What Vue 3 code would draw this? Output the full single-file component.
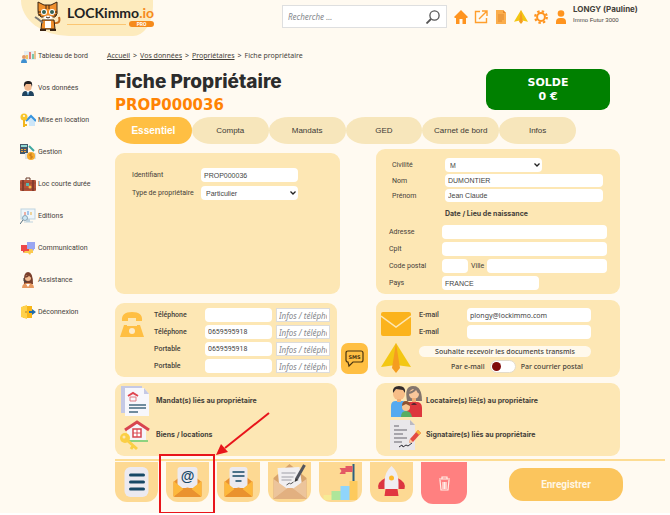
<script setup>
import { reactive, ref } from 'vue';

const search = ref('');
const activeTab = ref('Essentiel');
const tabs = ['Essentiel', 'Compta', 'Mandats', 'GED', 'Carnet de bord', 'Infos'];

const owner = reactive({
  id: 'PROP000036',
  type: 'Particulier',
  civilite: 'M',
  nom: 'DUMONTIER',
  prenom: 'Jean Claude',
  adresse: '',
  cplt: '',
  codePostal: '',
  ville: '',
  pays: 'FRANCE',
  email1: 'plongy@lockimmo.com',
  email2: '',
  parCourrier: false
});

const phones = reactive([
  { label: 'Téléphone', value: '', info: '' },
  { label: 'Téléphone', value: '0659595918', info: '' },
  { label: 'Portable', value: '0659595918', info: '' },
  { label: 'Portable', value: '', info: '' }
]);
</script>

<template>
  <div class="page">
    <header class="top-bar">
      <a class="logo" href="#" aria-label="LOCKimmo.io">
        <svg class="logo-cat" viewBox="0 0 28 30">
          <path d="M20 22q7 1 5-6" fill="none" stroke="#c56a1c" stroke-width="2" />
          <path d="M4 8 4 1l6 3h7l6-3v8q1 4-2 7H7Q3 13 4 8Z" fill="#ef8f2c" stroke="#3a2413" stroke-width="1" />
          <path d="M12 4v4M15 4v4M4 11h3M4 14h3M23 11h-3M23 14h-3" stroke="#3a2413" stroke-width="1" />
          <circle cx="10" cy="11" r="3" fill="#fff" />
          <circle cx="18" cy="11" r="3" fill="#fff" />
          <circle cx="10" cy="11" r="2" fill="#356253" />
          <circle cx="18" cy="11" r="2" fill="#356253" />
          <path d="M9 16q5-3 10 0-2 3-5 3t-5-3Z" fill="#fff" />
          <path d="M12 16q2 2 4 0" stroke="#3a2413" stroke-width="1" fill="none" />
          <path d="M8 19h12l1 9H7Z" fill="#ef8f2c" stroke="#3a2413" stroke-width="1" />
          <path d="M11 20h6v7h-6Z" fill="#fff" />
          <path d="M1 16l3 2 5 4" stroke="#777" stroke-width="2" fill="none" />
          <path d="M6 29h6M16 29h6" stroke="#3a2413" stroke-width="2" />
        </svg>
        <span class="logo-words">
          <span class="logo-name">LOCKimmo<span class="logo-ext">.io</span></span>
          <span class="logo-sub"><span class="logo-line"></span><span class="logo-pro">PRO</span></span>
        </span>
      </a>

      <form class="search" @submit.prevent>
        <input v-model="search" type="search" placeholder="Recherche ..." aria-label="Recherche" />
        <button type="submit" aria-label="Rechercher">
          <svg width="14" height="14" viewBox="0 0 14 14" fill="none" stroke="#555">
            <circle cx="8.500" cy="5.500" r="4.600" stroke-width="1.300" />
            <path d="M5 9 .5 13.500" stroke-width="1.800" />
          </svg>
        </button>
      </form>

      <nav class="shortcuts" aria-label="Raccourcis">
        <a href="#" aria-label="Accueil">
          <svg width="14" height="14" viewBox="0 0 14 14"><path d="M7 0 0 7l1 1h1v6h3.500V9h3v5H12V8h1l1-1Z" fill="#ff941f" /></svg>
        </a>
        <a href="#" aria-label="Ouvrir">
          <svg width="14" height="14" viewBox="0 0 14 14" fill="none" stroke="#ff9e2c" stroke-width="1.4">
            <path d="M6 1.500H1.500v11h11V8M8 1h5v5M13 1 5 9" />
          </svg>
        </a>
        <a href="#" aria-label="Documents">
          <svg width="14" height="14" viewBox="0 0 14 14">
            <path d="M2 0h7l3 3v11H2Z" fill="#fbad4c" />
            <path d="M9 0v3h3Z" fill="#e8892a" />
            <path d="M4 5h6M4 7h6M4 9h6M4 11h4" stroke="#d9822b" stroke-width=".8" />
          </svg>
        </a>
        <a href="#" aria-label="Envois">
          <svg width="14" height="14" viewBox="0 0 30 30">
            <path d="M15 0 30 25 15 22 0 25Z" fill="#f3c713" />
            <path d="M15 0 19 25 15 30 11 25Z" fill="#f59d20" />
          </svg>
        </a>
        <a href="#" aria-label="Réglages">
          <svg width="14" height="14" viewBox="0 0 14 14" fill="none" stroke="#ff941f">
            <circle cx="7" cy="7" r="3.900" stroke-width="2" />
            <circle cx="7" cy="7" r="5.800" stroke-width="2.200" stroke-dasharray="2.400 2.155" />
          </svg>
        </a>
        <a href="#" aria-label="Mon compte">
          <svg width="14" height="14" viewBox="0 0 14 14" fill="#ff941f">
            <circle cx="7" cy="3.500" r="3.300" />
            <path d="M2 14v-2q0-4 4-4h2q4 0 4 4v2Z" />
          </svg>
        </a>
      </nav>

      <div class="user">
        <strong>LONGY (Pauline)</strong>
        <span>Immo Futur 3000</span>
      </div>
    </header>

    <div class="body">
      <nav class="side" aria-label="Menu principal">
        <a href="#">
          <svg viewBox="0 0 16 16">
            <path d="M4 3h12v9H4Z" fill="#e6eef2" />
            <path d="M7 11V7" stroke="#f2b632" stroke-width="1.500" /><path d="M10 11V4" stroke="#e8574e" stroke-width="1.500" />
            <path d="M13 11V6" stroke="#57b894" stroke-width="1.500" /><path d="M15 11V3" stroke="#f09a37" />
            <circle cx="4" cy="9" r="2" fill="#e39b6b" /><path d="M1 15q0-4 3-4t3 4Z" fill="#3f8fd0" />
          </svg>
          Tableau de bord
        </a>
        <a href="#">
          <svg viewBox="0 0 16 16">
            <path d="M2 16q0-5 4-5h4q4 0 4 5Z" fill="#20435f" />
            <path d="M6 10h4l-2 5Z" fill="#fff" /><path d="M8 12v3" stroke="#2b8ccc" />
            <circle cx="8" cy="7" r="3.700" fill="#f3b98e" />
            <path d="M4 7Q3 0 9 1q4 0 3 6l-1-3H6Z" fill="#231f20" />
          </svg>
          Vos données
        </a>
        <a href="#">
          <svg viewBox="0 0 16 16">
            <path d="m7 8 4-4 5 5-1 1v4H9v-4Z" fill="#cde6f8" /><path d="m6 9 5-5 5 5" fill="none" stroke="#3794df" stroke-width="2" />
            <circle cx="4" cy="5" r="3.500" fill="#f8c52b" /><circle cx="4" cy="4" r="1" fill="#fff" />
            <path d="M4 8v7M4 13h3" stroke="#f2b51d" stroke-width="2" />
          </svg>
          Mise en location
        </a>
        <a href="#">
          <svg viewBox="0 0 16 16">
            <path d="M0 0h8v10H0Z" fill="#45586a" /><path d="M1 1h6v2H1Z" fill="#8fd7d2" />
            <path d="M1 5h2v1H1Zm3 0h2v1H4ZM1 7h2v1H1Zm3 0h2v1H4Z" fill="#f2a439" />
            <path d="M5 9h11v6H5Z" fill="#dce3e6" /><path d="m9 2 5 5" stroke="#3fa7a0" stroke-width="2" />
            <circle cx="11" cy="12" r="4" fill="#f6ab2d" /><path d="M12 10h-2v2h2v2h-2" fill="none" stroke="#b96a14" stroke-width=".8" />
          </svg>
          Gestion
        </a>
        <a href="#">
          <svg viewBox="0 0 16 16">
            <path d="M6 4V2h4v2" fill="none" stroke="#6b3a2a" /><rect y="4" width="16" height="11" rx="1" fill="#b65339" />
            <path d="M3 4v11M13 4v11" stroke="#74382b" stroke-width="1.500" /><path d="M0 7h16M0 13h16" stroke="#85402e" stroke-width=".7" />
            <path d="M6 7h3v3H6Z" fill="#54b6ae" /><circle cx="10" cy="11" r="1.500" fill="#f1bc48" />
          </svg>
          Loc courte durée
        </a>
        <a href="#">
          <svg viewBox="0 0 16 16">
            <rect x="1" y="1" width="14" height="10" fill="#eff6fa" stroke="#bfd3df" /><path d="M7 11h3v3H6Z" fill="#bfd3df" /><path d="M4 14h9" stroke="#bfd3df" />
            <path d="M5 7V4" stroke="#ee6a50" /><path d="M8 7V3" stroke="#5d97dd" /><path d="M11 7V4" stroke="#efb13b" />
            <circle cx="5" cy="10" r="2.500" fill="#cce7f5" stroke="#7893a5" stroke-width=".8" /><path d="m3 12-3 4" stroke="#546e80" />
          </svg>
          Editions
        </a>
        <a href="#">
          <svg viewBox="0 0 16 16">
            <path d="M4 8h9v5h-2l-1 2-2-2H4Z" fill="#fbc94e" /><path d="M1 5h8v6H5l-2 2v-2H1Z" fill="#ee4747" />
            <path d="M7 2h8v7h-1v2l-2-2H7Z" fill="#9aa6f2" />
          </svg>
          Communication
        </a>
        <a href="#">
          <svg viewBox="0 0 16 16">
            <path d="M4 12Q3 0 8 0t5 12Z" fill="#7a3f2c" /><path d="M2 16q0-5 6-5t6 5Z" fill="#e79961" />
            <circle cx="8" cy="6" r="3" fill="#f3bd92" /><path d="M5 5q3 0 4-3l2 3" fill="none" stroke="#7a3f2c" stroke-width="1.500" />
            <path d="M4 6v3l3 1" fill="none" stroke="#444" /><path d="m6 12 2 3 2-3Z" fill="#fff" />
          </svg>
          Assistance
        </a>
        <a href="#">
          <svg viewBox="0 0 16 16">
            <path d="M3 2h9v12H3Z" fill="#f8b619" /><path d="m1 3 6-2v14l-6-2Z" fill="#ffd14a" /><circle cx="6" cy="8" r=".7" fill="#9c6810" />
            <path d="M9 7h3V5l4 3-4 3V9H9Z" fill="#216ba8" />
          </svg>
          Déconnexion
        </a>
      </nav>

      <main class="main">
        <nav class="crumbs" aria-label="Fil d'ariane">
          <a href="#">Accueil</a><span>&gt;</span>
          <a href="#">Vos données</a><span>&gt;</span>
          <a href="#">Propriétaires</a><span>&gt;</span>
          <span>Fiche propriétaire</span>
        </nav>

        <div class="heading">
          <div class="heading-text">
            <h1>Fiche Propriétaire</h1>
            <p class="ref">PROP000036</p>
          </div>
          <div class="balance">
            <span>SOLDE</span>
            <span>0 €</span>
          </div>
        </div>

        <div class="tabs">
          <button
            v-for="tab in tabs"
            :key="tab"
            type="button"
            class="tab"
            :class="{ active: tab === activeTab }"
            @click="activeTab = tab"
          >{{ tab }}</button>
        </div>

        <div class="row row-identity">
          <section class="panel panel-id">
            <div class="field">
              <label for="identifiant">Identifiant</label>
              <input id="identifiant" v-model="owner.id" class="short" type="text" />
            </div>
            <div class="field">
              <label for="type">Type de propriétaire</label>
              <select id="type" v-model="owner.type" class="short">
                <option>Particulier</option>
                <option>Société</option>
              </select>
            </div>
          </section>

          <section class="panel panel-person">
            <div class="names">
              <div class="field">
                <label for="civilite">Civilité</label>
                <select id="civilite" v-model="owner.civilite" class="short">
                  <option>M</option>
                  <option>Mme</option>
                </select>
              </div>
              <div class="field">
                <label for="nom">Nom</label>
                <input id="nom" v-model="owner.nom" type="text" />
              </div>
              <div class="field">
                <label for="prenom">Prénom</label>
                <input id="prenom" v-model="owner.prenom" type="text" />
              </div>
            </div>
            <p class="birth">Date / Lieu de naissance</p>
            <div class="address">
              <div class="field">
                <label for="adresse">Adresse</label>
                <input id="adresse" v-model="owner.adresse" type="text" />
              </div>
              <div class="field">
                <label for="cplt">Cplt</label>
                <input id="cplt" v-model="owner.cplt" type="text" />
              </div>
              <div class="field">
                <label for="cp">Code postal</label>
                <div class="city">
                  <input id="cp" v-model="owner.codePostal" type="text" class="zip" />
                  <label for="ville">Ville</label>
                  <input id="ville" v-model="owner.ville" type="text" />
                </div>
              </div>
              <div class="field">
                <label for="pays">Pays</label>
                <input id="pays" v-model="owner.pays" class="short" type="text" />
              </div>
            </div>
          </section>
        </div>

        <div class="row row-contact">
          <section class="panel panel-phone">
            <svg class="phone-icon" viewBox="0 0 24 28">
              <path d="M2 10Q1 1 12 1t10 9h-6V7H8v3Z" fill="#ffbf43" />
              <path d="M4 14h3v1h10v-1h3l4 12H0Z" fill="#ffbf43" />
              <circle cx="12" cy="20" r="3" fill="#fdeccb" />
            </svg>
            <div class="phones">
              <div v-for="(phone, i) in phones" :key="i" class="phone">
                <label :for="'tel' + i">{{ phone.label }}</label>
                <input :id="'tel' + i" v-model="phone.value" type="tel" />
                <input v-model="phone.info" class="info" type="text" placeholder="Infos / téléphone" :aria-label="'Infos ' + phone.label" />
              </div>
            </div>
          </section>

          <button type="button" class="sms" aria-label="Envoyer un SMS">
            <svg width="19" height="18" viewBox="0 0 19 18">
              <path d="M3 1h13q2 0 2 2v7q0 2-2 2H8l-4 4-1-4q-2 0-2-2V3q0-2 2-2Z" fill="none" stroke="#4b3510" stroke-width="1.200" />
              <text x="9.500" y="9" text-anchor="middle">SMS</text>
            </svg>
          </button>

          <section class="panel panel-mail">
            <div class="mail-icons">
              <svg width="30" height="24" viewBox="0 0 30 24">
                <rect width="30" height="24" rx="2" fill="#fbb31c" />
                <path d="m0 4 15 11L30 4" fill="none" stroke="#fde7b4" stroke-width="1.500" />
              </svg>
              <svg width="30" height="30" viewBox="0 0 30 30">
                <path d="M15 0 30 24 15 22 0 24Z" fill="#f3c713" />
                <path d="M15 0 19 25 15 30 11 25Z" fill="#f59d20" />
              </svg>
            </div>
            <div class="mail-fields">
              <div class="mail">
                <label for="email1">E-mail</label>
                <input id="email1" v-model="owner.email1" type="email" />
              </div>
              <div class="mail">
                <label for="email2">E-mail</label>
                <input id="email2" v-model="owner.email2" type="email" />
              </div>
              <p class="pill">Souhaite recevoir les documents transmis</p>
              <div class="choice">
                <span>Par e-mail</span>
                <input id="courrier" v-model="owner.parCourrier" type="checkbox" />
                <label for="courrier">Par courrier postal</label>
              </div>
            </div>
          </section>
        </div>

        <div class="row row-links">
          <section class="panel panel-links">
            <a href="#">
              <svg viewBox="0 0 32 32">
                <path d="M1 1h21v27H1Z" fill="#c5c9e5" />
                <path d="M5 3h19l5 6v22H5Z" fill="#f7f7fc" /><path d="M24 3v6h5Z" fill="#c5c9e5" />
                <path d="m8 11 5-3 5 3" fill="none" stroke="#df4550" stroke-width="2" /><path d="M10 12h6v4h-6Z" fill="none" stroke="#df7a82" />
                <path d="M9 20h17M9 23h17M9 27h9" stroke="#44697f" stroke-width="1.300" />
              </svg>
              Mandat(s) liés au propriétaire
            </a>
            <a href="#">
              <svg viewBox="0 0 32 32">
                <path d="M7 10 17 3l9 7v12H7Z" fill="#f5f5fa" /><path d="m5 11 12-8 12 8" fill="none" stroke="#d84550" stroke-width="3" />
                <rect x="13" y="10" width="8" height="8" fill="#fff" stroke="#d84550" stroke-width="1.500" /><path d="M17 10v8M13 14h8" stroke="#d84550" />
                <path d="M7 22h21" stroke="#8ed37f" stroke-width="2" />
                <circle cx="5" cy="19" r="5" fill="#fbcf45" /><circle cx="4" cy="18" r="1.500" fill="#fde7b4" />
                <path d="m8 22 9 8M13 27l-2 3" stroke="#fbcf45" stroke-width="3" />
              </svg>
              Biens / locations
            </a>
          </section>

          <section class="panel panel-links">
            <a href="#">
              <svg viewBox="0 0 32 32">
                <path d="M17 16Q14 1 23 1t9 15Z" fill="#84766d" />
                <path d="M1 32V21q0-5 5-5h6q5 0 5 5v11Z" fill="#55aaf0" /><path d="M17 32V17h11q4 1 4 6v9Z" fill="#dd373d" />
                <circle cx="9" cy="9" r="6" fill="#f7bd87" /><path d="M3 8Q2 1 9 1t6 7l-2-3-7-1Z" fill="#332b2a" />
                <circle cx="24" cy="9" r="5" fill="#f9c79b" /><path d="M19 8q5-1 7-5l3 5" fill="none" stroke="#84766d" stroke-width="2" />
                <path d="M7 14h4v3H7ZM22 13h4v4h-4Z" fill="#efad76" /><path d="m23 18-2 2h6l-2-2Z" fill="#5d2630" />
                <path d="M11 32q0-6 5-6t6 6Z" fill="#58ad62" /><circle cx="16" cy="22" r="4" fill="#f8c693" /><path d="M12 21q0-5 4-5t4 5l-4-2Z" fill="#8e5130" />
              </svg>
              Locataire(s) lié(s) au propriétaire
            </a>
            <a href="#">
              <svg viewBox="0 0 32 32">
                <path d="M0 1h20l5 5v25H0Z" fill="#e9e7ea" /><path d="M20 1v5h5Z" fill="#bbb9c1" />
                <path d="M4 7h5M4 11h13M4 15h9M4 19h13M4 23h8" stroke="#66646c" stroke-width="1.200" />
                <path d="m9 28 3-2 1 2 3-2 2 1 4-3" fill="none" stroke="#33313a" />
                <path d="m20 20 8-9 3 3-8 9-4 1Z" fill="#e34b42" /><path d="m26 13 2-2 3 3-2 2Z" fill="#f8b739" /><path d="m20 20-1 4 4-1Z" fill="#f7cda1" />
              </svg>
              Signataire(s) liés au propriétaire
            </a>
          </section>
        </div>

        <footer class="actions">
          <button type="button" class="action" aria-label="Menu">
            <svg viewBox="0 0 42 40">
              <rect x="9" y="5" width="24" height="30" rx="6" fill="#eceaf0" />
              <path d="M15 13h13M15 20h13M15 27h13" stroke="#164866" stroke-width="3" stroke-linecap="round" />
            </svg>
          </button>
          <div class="marked">
            <button type="button" class="action" aria-label="Envoyer un e-mail">
              <svg viewBox="0 0 42 40">
                <path d="m7 20 6-5h16l6 5v14H7Z" fill="#e9902f" /><path d="M11 8q0-3 3-3h14q3 0 3 3v18H11Z" fill="#eceaf0" />
                <path d="m7 19 10 8-10 8ZM35 19l-10 8 10 8Z" fill="#fdb83c" /><path d="m7 35 12-9q2-1 4 0l12 9Z" fill="#ea922f" />
                <text class="at" x="21" y="19" text-anchor="middle">@</text>
              </svg>
            </button>
            <svg class="marker" width="112" height="104" viewBox="0 0 112 104">
              <rect x="1" y="44" width="54" height="58" fill="none" stroke="#e8151b" stroke-width="2" />
              <path d="M110 2 66 37" stroke="#e8151b" stroke-width="2" /><path d="m57 44 5-11 7 8Z" fill="#e8151b" />
            </svg>
          </div>
          <button type="button" class="action" aria-label="Courrier">
            <svg viewBox="0 0 42 40">
              <path d="m7 20 6-5h16l6 5v14H7Z" fill="#e9902f" /><path d="M12 8q0-3 3-3h12q3 0 3 3v18H12Z" fill="#eceaf0" />
              <path d="m7 19 10 8-10 8ZM35 19l-10 8 10 8Z" fill="#fdb83c" /><path d="m7 35 12-9q2-1 4 0l12 9Z" fill="#ea922f" />
              <path d="M15 10h12M15 14h12M18 19h6" stroke="#164866" stroke-width="1.600" />
            </svg>
          </button>
          <button type="button" class="action" aria-label="Lettre">
            <svg viewBox="0 0 42 40">
              <path d="M5 16 21 2l17 14v21H5Z" fill="#d7a36b" /><path d="m9 6 22-1 3 22H11Z" fill="#f1eff1" />
              <path d="M13 11h14M13 15h12M13 18h10" stroke="#a0a0a8" stroke-width="1.200" /><path d="m18 23 3-2 1 1 3-2" fill="none" stroke="#555" />
              <path d="m5 17 14 10L5 37ZM38 17 24 27l14 10Z" fill="#ecc49b" /><path d="m5 37 14-11h5l14 11Z" fill="#e2b080" />
              <path d="m28 17 8-14" stroke="#52555e" stroke-width="3" /><path d="m26 20 1-4 3 2Z" fill="#333" />
            </svg>
          </button>
          <button type="button" class="action" aria-label="Objectifs">
            <svg viewBox="0 0 42 40">
              <path d="M4 33h9v5H4Z" fill="#f7ea94" /><path d="M12 29h10v9H12Z" fill="#aee69a" /><path d="M21 24h10v14H21Z" fill="#90d5fb" /><path d="M30 19h8v19h-8Z" fill="#fdca5c" />
              <path d="M34 2v17" stroke="#2d6180" stroke-width="2" /><path d="M26 4h7v6h-7v2h-6l2-3-2-3h6Z" fill="#e35864" />
            </svg>
          </button>
          <button type="button" class="action" aria-label="Lancer">
            <svg viewBox="0 0 42 40">
              <path d="M15 16q-9 4-7 11h8ZM27 16q9 4 7 11h-8Z" fill="#dc3540" />
              <path d="M15 27h12l1 7H14Z" fill="#e13540" /><path d="M21 4q-7 6-7 16v7h14v-7q0-10-7-16Z" fill="#f0edf1" />
              <circle cx="21" cy="16" r="2.500" fill="#fdb82c" />
            </svg>
          </button>
          <button type="button" class="action delete" aria-label="Supprimer">
            <svg viewBox="0 0 46 42">
              <path d="M18 17h11M21 17v-2h5v2M19 18l1 10h7l1-10M22 20v7M23.500 20v7M25 20v7" fill="none" stroke="#fff0e8" stroke-width="1.200" />
            </svg>
          </button>
          <button type="button" class="save">Enregistrer</button>
        </footer>
      </main>
    </div>
  </div>
</template>

<style>
body {
  background: #fff;
}
</style>

<style scoped>
.page {
  background: #fffaf1;
  font-family: Roboto, "Liberation Sans", sans-serif;
  font-size: 7px;
  line-height: 10px;
  color: #45413a;
}

.page *, .page *::before {
  box-sizing: border-box;
}

p, h1 {
  margin: 0;
}

a {
  color: inherit;
}

button {
  border: none;
  padding: 0;
  cursor: pointer;
  font-family: inherit;
}

svg {
  display: block;
  flex-shrink: 0;
}

input, select {
  width: 100%;
  min-width: 0;
  height: 14px;
  padding: 0 3px;
  border: none;
  border-radius: 4px;
  background: #fff;
  font-family: "Liberation Sans", Arial, sans-serif;
  font-size: 7px;
  color: #444;
}

select {
  appearance: none;
  padding: 0 5px;
  background: #fff url("data:image/svg+xml,%3Csvg xmlns='http://www.w3.org/2000/svg' width='6' height='4' viewBox='0 0 6 4'%3E%3Cpath d='M.5.5 3 3 5.500.5' fill='none' stroke='%23222' stroke-width='1.300'/%3E%3C/svg%3E") no-repeat right 2px center;
}

/* header */
.top-bar {
  display: flex;
  align-items: flex-start;
  height: 40px;
}

.logo {
  display: flex;
  width: 132px;
  height: 36px;
  margin-left: 21px;
  padding: 1px 0 0 13px;
  gap: 5px;
  background: #fdebbe;
  border-radius: 0 0 20px 48px / 0 0 30px 36px;
  text-decoration: none;
}

.logo-cat {
  width: 28px;
  height: 30px;
}

.logo-words {
  display: flex;
  flex-direction: column;
  padding-top: 3px;
}

.logo-name {
  font-family: Lato, sans-serif;
  font-size: 14px;
  line-height: 17px;
  font-weight: 700;
  color: #222;
}

.logo-ext {
  color: #f58a1c;
}

.logo-sub {
  display: flex;
  align-items: center;
  gap: 3px;
}

.logo-line {
  flex: 1;
  height: 1px;
  background: #fbc672;
}

.logo-pro {
  width: 25px;
  border-radius: 3px;
  background: #f58a1c;
  color: #fff;
  font-size: 5px;
  line-height: 6px;
  font-weight: 700;
  text-align: center;
}

.search {
  display: flex;
  flex: 1;
  align-items: center;
  height: 23px;
  margin: 5px 7px 0 129px;
  border: 1px solid #dedfe0;
  background: #fff;
}

.search input {
  flex: 1;
  height: 20px;
  padding: 0 5px;
  font-family: "Noto Sans", sans-serif;
}

.search input::placeholder, .info::placeholder {
  font-style: italic;
  color: #85888c;
}

.search input, .info {
  font-size: 8px;
}

.search button {
  width: 20px;
  background: none;
}

.shortcuts {
  display: flex;
  gap: 6px;
  padding-top: 10px;
}

.user {
  display: flex;
  flex-direction: column;
  width: 97px;
  margin: 3px 0 0 5px;
  white-space: nowrap;
}

.user strong {
  font-family: Inter, sans-serif;
  font-size: 8px;
  line-height: 12px;
}

.user span {
  font-family: "Liberation Sans", Arial, sans-serif;
  font-size: 6px;
}

/* layout */
.body {
  display: grid;
  grid-template-columns: 115px 1fr;
}

.side {
  display: flex;
  flex-direction: column;
}

.side a {
  display: flex;
  align-items: center;
  gap: 2px;
  height: 32px;
  padding-left: 20px;
  text-decoration: none;
  white-space: nowrap;
}

.side svg {
  width: 16px;
  height: 16px;
}

.main {
  min-width: 0;
  padding: 11px 5px 8px 0;
}

.crumbs {
  display: flex;
  gap: 3px;
  margin-left: -8px;
  font-family: "Noto Sans", sans-serif;
}

.heading {
  display: flex;
  justify-content: space-between;
  margin: 8px 55px 0 0;
}

h1 {
  font-family: Inter, sans-serif;
  font-size: 19px;
  line-height: 25px;
  font-weight: 800;
  color: #2c2c2c;
}

.ref {
  font-family: "DejaVu Sans", sans-serif;
  font-size: 15px;
  line-height: 22px;
  font-weight: 700;
  color: #ff8303;
}

.balance {
  display: flex;
  flex-direction: column;
  justify-content: center;
  align-items: center;
  width: 124px;
  height: 41px;
  border-radius: 9px;
  background: #008000;
  color: #fff;
  font-family: "DejaVu Sans", sans-serif;
  font-size: 11px;
  line-height: 14px;
  font-weight: 700;
}

.tabs {
  display: grid;
  grid-template-columns: repeat(6, 1fr);
  margin: 1px 89px 0 0;
}

.tab {
  height: 27px;
  border-radius: 20px 14px 14px 20px / 14px;
  background: #f7e6bb;
  color: #3c3a36;
  font-family: "Liberation Sans", Arial, sans-serif;
  font-size: 8px;
  white-space: nowrap;
}

.tab.active {
  background: #ffbf43;
  color: #fff;
  font-size: 10px;
  font-weight: 700;
}

/* panels */
.row {
  display: grid;
  margin-right: 45px;
}

.row-identity {
  grid-template-columns: 225fr 244fr;
  column-gap: 36px;
  align-items: end;
  margin-top: 5px;
}

.row-contact {
  grid-template-columns: 222fr auto 244fr;
  align-items: end;
  margin-top: 6px;
}

.row-links {
  grid-template-columns: 222fr 244fr;
  column-gap: 39px;
  margin-top: 6px;
}

.panel {
  border-radius: 9px;
  background: #fde7b4;
}

.field {
  display: grid;
  grid-template-columns: 53px 1fr;
  align-items: center;
  white-space: nowrap;
}

.short {
  max-width: 97px;
}

.panel-id {
  display: flex;
  flex-direction: column;
  gap: 4px;
  min-height: 141px;
  padding: 15px 17px;
}

.panel-id .field {
  grid-template-columns: 69px 1fr;
}

.panel-person {
  padding: 9px 13px 4px;
}

.names {
  display: grid;
  gap: 2px;
  padding: 0 4px 0 3px;
}

.names input {
  height: 13px;
}

.birth {
  padding-left: 56px;
  font-family: Inter, sans-serif;
  font-weight: 700;
  line-height: 23px;
}

.address {
  display: grid;
  gap: 3px;
}

.city {
  display: flex;
  align-items: center;
  gap: 3px;
}

.city .zip {
  width: 26px;
  flex-shrink: 0;
}

.panel-phone {
  display: flex;
  gap: 10px;
  padding: 5px 7px 4px 5px;
}

.phone-icon {
  width: 24px;
  height: 28px;
  margin-top: 3px;
}

.phones {
  display: grid;
  flex: 1;
  gap: 3px;
}

.phone {
  display: grid;
  grid-template-columns: 47px 67fr 54fr;
  column-gap: 4px;
  align-items: center;
  font-weight: 500;
}

.phone input {
  font-family: Roboto, sans-serif;
}

.phone .info {
  border: 1px solid #dcdcdc;
  border-radius: 0;
  padding: 0 2px;
  font-family: "Noto Sans", sans-serif;
}

.sms {
  display: flex;
  align-items: center;
  justify-content: center;
  width: 27px;
  height: 31px;
  margin: 0 8px 3px 4px;
  border-radius: 7px;
  background: #ffbf43;
}

.sms text {
  font-family: "DejaVu Sans", sans-serif;
  font-size: 5px;
  font-weight: 700;
  fill: #4b3510;
}

.panel-mail {
  display: flex;
  gap: 8px;
  padding: 8px 29px 4px 5px;
}

.mail-icons {
  display: flex;
  flex-direction: column;
  gap: 7px;
  padding-top: 4px;
}

.mail-fields {
  display: flex;
  flex: 1;
  flex-direction: column;
  gap: 3px;
  font-weight: 500;
}

.mail {
  display: grid;
  grid-template-columns: 48px 1fr;
  align-items: center;
}

.mail input {
  font-family: "Noto Sans", sans-serif;
}

.pill {
  margin-top: 4px;
  border-radius: 6px;
  background: #fff9ec;
  font-family: "Noto Sans", sans-serif;
  line-height: 11px;
  text-align: center;
}

.choice {
  display: flex;
  align-items: center;
  justify-content: flex-end;
  gap: 5px;
  padding-right: 8px;
  font-family: "Noto Sans", sans-serif;
}

.choice input {
  appearance: none;
  width: 26px;
  height: 13px;
  margin: 0;
  padding: 1px;
  border: 1px solid #e4dccb;
  border-radius: 7px;
}

.choice input::before {
  content: "";
  display: block;
  width: 9px;
  height: 9px;
  border-radius: 50%;
  background: #800a0a;
}

.choice input:checked::before {
  margin-left: auto;
}

.panel-links {
  display: grid;
  gap: 2px;
  padding: 2px 13px 5px 5px;
}

.panel-links + .panel-links {
  padding-left: 14px;
}

.panel-links a {
  display: flex;
  align-items: center;
  gap: 4px;
  font-family: Inter, sans-serif;
  font-weight: 700;
  text-decoration: none;
}

.panel-links svg {
  width: 32px;
  height: 32px;
}

/* bottom bar */
.actions {
  display: flex;
  align-items: flex-start;
  gap: 8px;
  margin-top: 3px;
  padding-top: 1px;
  border-top: 2px solid #fddc93;
}

.action {
  width: 43px;
  height: 40px;
  flex-shrink: 0;
  overflow: hidden;
  border-radius: 0 0 12px 12px;
  background: #fdd993;
}

.action svg {
  width: 100%;
  height: 100%;
}

.action.delete {
  width: 46px;
  height: 42px;
  background: #ff8080;
}

.at {
  font-family: "Liberation Sans", Arial, sans-serif;
  font-size: 14px;
  font-weight: 700;
  fill: #164866;
}

.marked {
  position: relative;
}

/* red callout drawn over the page */
.marker {
  position: absolute;
  left: -7px;
  top: -51px;
  pointer-events: none;
}

.save {
  width: 114px;
  height: 33px;
  margin: 6px 0 0 34px;
  border-radius: 14px;
  background: #fbc55d;
  color: #fff7e6;
  font-size: 10px;
  font-weight: 700;
}
</style>
